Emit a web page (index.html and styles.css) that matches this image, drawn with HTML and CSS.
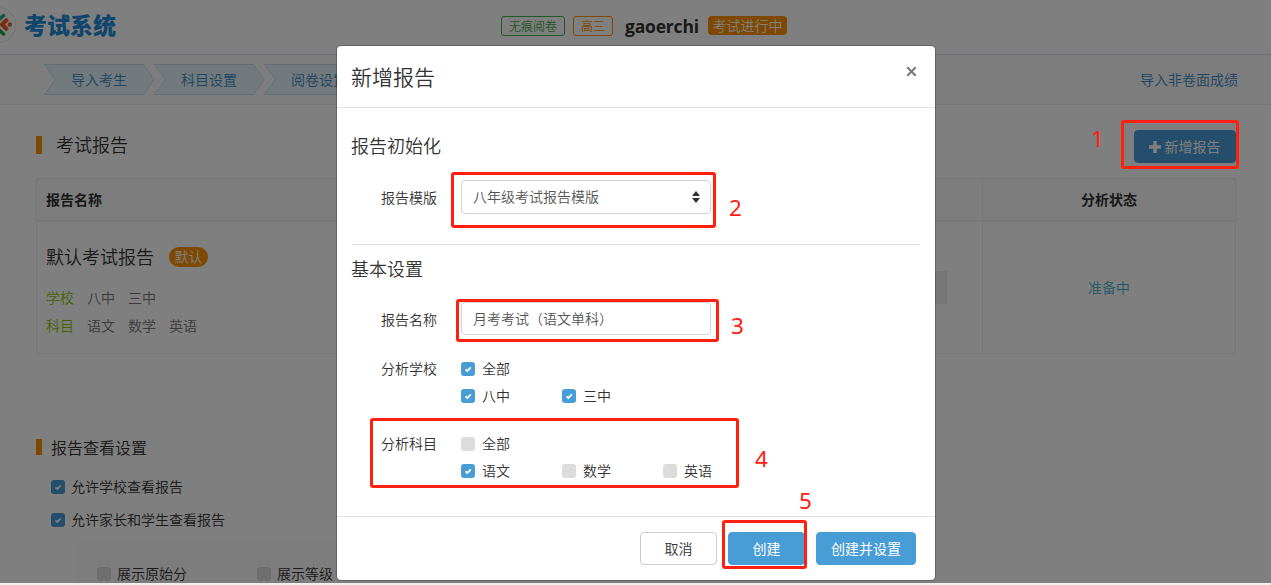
FILE: index.html
```html
<!DOCTYPE html>
<html lang="zh-CN">
<head>
    <meta charset="UTF-8">
    <meta name="viewport" content="width=device-width, initial-scale=1.0">
    <title>考试系统</title>
    <link rel="stylesheet" href="styles.css">
</head>
<body>
    <div class="page">
        <header class="header">
            <div class="logo">
                <svg class="logo-mark" width="16" height="36" viewBox="0 0 16 36">
                    <circle cx="-2" cy="18" r="17.5" fill="#fff" stroke="#e6e6e6"/>
                    <path d="M-1 12.500 L3.500 8.500" stroke="#22a596" stroke-width="3.500" stroke-linecap="round"/>
                    <path d="M-1 23 L3.500 27" stroke="#22a03c" stroke-width="3.500" stroke-linecap="round"/>
                    <path d="M7.500 12 L2 17.500 L7.500 23" fill="none" stroke="#f05a1e" stroke-width="4"/>
                    <circle cx="9.800" cy="17.500" r="2.200" fill="#f05a1e"/>
                </svg>
                <span class="logo-text">考试系统</span>
            </div>
            <div class="exam-info">
                <span class="tag tag-green">无痕阅卷</span>
                <span class="tag tag-orange">高三</span>
                <span class="exam-name">gaoerchi</span>
                <span class="tag-status">考试进行中</span>
            </div>
        </header>

        <nav class="nav">
            <div class="steps">
                <a class="step">
                    <svg width="111" height="31" viewBox="0 0 111 31"><path d="M.5 .5H99.500L110 15.500L99.500 30.500H.5L11.500 15.500Z"/></svg>
                    <span>导入考生</span>
                </a>
                <a class="step">
                    <svg width="111" height="31" viewBox="0 0 111 31"><path d="M.5 .5H99.500L110 15.500L99.500 30.500H.5L11.500 15.500Z"/></svg>
                    <span>科目设置</span>
                </a>
                <a class="step">
                    <svg width="111" height="31" viewBox="0 0 111 31"><path d="M.5 .5H99.500L110 15.500L99.500 30.500H.5L11.500 15.500Z"/></svg>
                    <span>阅卷设置</span>
                </a>
            </div>
            <a class="nav-link">导入非卷面成绩</a>
        </nav>

        <main class="content">
            <div class="title-row">
                <h2 class="title">考试报告</h2>
                <button class="btn btn-primary btn-add">
                    <svg width="12" height="12" viewBox="0 0 12 12"><path d="M4.300 0H7.700V4.300H12V7.700H7.700V12H4.300V7.700H0V4.300H4.300Z" fill="#fff"/></svg>
                    新增报告
                </button>
            </div>

            <div class="table">
                <div class="table-head">
                    <div class="cell">报告名称</div>
                    <div class="cell cell-status">分析状态</div>
                </div>
                <div class="table-body">
                    <div class="cell">
                        <div class="report-info">
                            <div class="report-name">默认考试报告<span class="badge">默认</span></div>
                            <div class="report-line"><b>学校</b><span>八中</span><span>三中</span></div>
                            <div class="report-line"><b>科目</b><span>语文</span><span>数学</span><span>英语</span></div>
                        </div>
                        <div class="report-action"></div>
                    </div>
                    <div class="cell cell-status">准备中</div>
                </div>
            </div>

            <h2 class="title title-view">报告查看设置</h2>
            <div class="view-options">
                <div class="check checked">
                    <svg class="box" viewBox="0 0 14 14"><path d="M4.500 7.300L6.300 9L9.800 5.300"/></svg>
                    <span>允许学校查看报告</span>
                </div>
                <div class="check checked">
                    <svg class="box" viewBox="0 0 14 14"><path d="M4.500 7.300L6.300 9L9.800 5.300"/></svg>
                    <span>允许家长和学生查看报告</span>
                </div>
            </div>
            <div class="sub-options">
                <div class="check"><i class="box"></i><span>展示原始分</span></div>
                <div class="check"><i class="box"></i><span>展示等级</span></div>
            </div>
        </main>
        <div class="backdrop"></div>
    </div>

    <div class="modal">
        <div class="modal-header">
            <h3>新增报告</h3>
            <svg class="close" width="11" height="11" viewBox="0 0 11 11"><path d="M1.300 1.300L9.700 9.700M9.700 1.300L1.300 9.700"/></svg>
        </div>
        <div class="modal-body">
            <section class="section-init">
                <h4>报告初始化</h4>
                <div class="form-row">
                    <label>报告模版</label>
                    <div class="field">
                        八年级考试报告模版
                        <svg width="8" height="12" viewBox="0 0 8 12"><path d="M0 5L4 0L8 5ZM0 7H8L4 12Z" fill="#333"/></svg>
                    </div>
                </div>
            </section>
            <section class="section-basic">
                <h4>基本设置</h4>
                <div class="form-row">
                    <label>报告名称</label>
                    <div class="field field-name">月考考试（语文单科）</div>
                </div>
                <div class="form-row check-row">
                    <label>分析学校</label>
                    <div class="checks">
                        <div class="check check-all checked">
                            <svg class="box" viewBox="0 0 14 14"><path d="M4.500 7.300L6.300 9L9.800 5.300"/></svg>
                            <span>全部</span>
                        </div>
                        <div class="check checked">
                            <svg class="box" viewBox="0 0 14 14"><path d="M4.500 7.300L6.300 9L9.800 5.300"/></svg>
                            <span>八中</span>
                        </div>
                        <div class="check checked">
                            <svg class="box" viewBox="0 0 14 14"><path d="M4.500 7.300L6.300 9L9.800 5.300"/></svg>
                            <span>三中</span>
                        </div>
                    </div>
                </div>
                <div class="form-row check-row">
                    <label>分析科目</label>
                    <div class="checks">
                        <div class="check check-all"><i class="box"></i><span>全部</span></div>
                        <div class="check checked">
                            <svg class="box" viewBox="0 0 14 14"><path d="M4.500 7.300L6.300 9L9.800 5.300"/></svg>
                            <span>语文</span>
                        </div>
                        <div class="check"><i class="box"></i><span>数学</span></div>
                        <div class="check"><i class="box"></i><span>英语</span></div>
                    </div>
                </div>
            </section>
        </div>
        <div class="modal-footer">
            <button class="btn btn-default">取消</button>
            <button class="btn btn-primary">创建</button>
            <button class="btn btn-primary btn-wide">创建并设置</button>
        </div>
    </div>

    <!-- Numbered guide marks -->
    <div class="mark mark-1"><span>1</span></div>
    <div class="mark mark-2"><span>2</span></div>
    <div class="mark mark-3"><span>3</span></div>
    <div class="mark mark-4"><span>4</span></div>
    <div class="mark mark-5"><span>5</span></div>
</body>
</html>
```
FILE: styles.css
```css
* {
    box-sizing: border-box;
}

body {
    margin: 0;
    height: 585px;
    overflow: hidden;
    position: relative;
    background-color: #f0f0f0;
    font-family: "Open Sans", "Noto Sans CJK SC", sans-serif;
    font-size: 14px;
    line-height: 20px;
    font-weight: 350;
    color: #333;
}

h2, h3, h4 {
    margin: 0;
    font-weight: 350;
}

.page {
    position: relative;
    height: 583px;
    overflow: hidden;
    background: #fff;
}

.backdrop {
    position: absolute;
    inset: 0;
    background: rgba(0, 0, 0, 0.5);
}

/* Header */
.header {
    position: relative;
    height: 55px;
    border-bottom: 1px solid #d3deea;
}

.logo {
    display: flex;
    align-items: center;
    padding-top: 7px;
}

.logo-text {
    margin-left: 8px;
    font-size: 23px;
    line-height: 36px;
    font-weight: 900;
    color: #218ad8;
}

.exam-info {
    position: absolute;
    left: 501px;
    top: 16px;
    display: flex;
    align-items: center;
    height: 20px;
}

.tag {
    height: 20px;
    padding: 0 7px;
    margin-right: 8px;
    border: 1px solid;
    border-radius: 3px;
    font-size: 12px;
    line-height: 19px;
}

.tag-green {
    color: #4cae4c;
}

.tag-orange {
    color: #ff9000;
}

.exam-name {
    width: 74px;
    margin: -1px 9px 0 4px;
    font-size: 17.500px;
    font-weight: 700;
    letter-spacing: -0.200px;
}

.tag-status {
    width: 79px;
    height: 19px;
    margin-top: -1px;
    border-radius: 4px;
    background: #ff9000;
    color: #fff;
    line-height: 19px;
    text-align: center;
}

/* Step navigation */
.nav {
    display: flex;
    justify-content: space-between;
    height: 50px;
    padding: 9px 33px 0 44px;
    background: #fbfbfb;
    border-bottom: 1px solid #eee;
    color: #3c8dc5;
}

.steps {
    display: flex;
}

.step {
    position: relative;
    width: 110px;
    height: 31px;
    line-height: 31px;
    text-align: center;
}

.step svg {
    position: absolute;
    left: 0;
    top: 0;
    fill: #e6f4fa;
    stroke: #c5dfee;
}

.step span {
    position: relative;
}

.nav-link {
    line-height: 31px;
}

/* Reports */
.content {
    padding: 25px 35px 0 36px;
}

.title-row {
    display: flex;
    justify-content: space-between;
    height: 48px;
}

.title {
    height: 18px;
    margin-top: 6px;
    padding-left: 14px;
    border-left: 6px solid #ff9000;
    font-size: 18px;
    line-height: 18px;
}

.btn {
    height: 33px;
    padding: 0;
    border: 1px solid #489dd6;
    border-radius: 4px;
    font: inherit;
}

.btn-primary {
    background: #489dd6;
    color: #fff;
    font-weight: 400;
}

.btn-add {
    display: flex;
    align-items: center;
    justify-content: center;
    gap: 4px;
    width: 102px;
    padding-right: 1px;
}

.table {
    border: 1px solid #eee;
}

.table-head,
.table-body {
    display: flex;
}

.table-head {
    height: 43px;
    border-bottom: 2px solid #eee;
    background: #fbfbfb;
    font-weight: 700;
    line-height: 42px;
}

.table-body {
    height: 131px;
}

.cell {
    flex: 1;
    display: flex;
    justify-content: space-between;
    padding: 0 35px 0 9px;
}

.cell-status {
    flex: none;
    width: 253px;
    padding: 0;
    border-left: 1px solid #eee;
    justify-content: center;
}

.table-body .cell-status {
    line-height: 131px;
    color: #45b1d0;
}

.report-name {
    display: flex;
    align-items: center;
    height: 28px;
    margin: 21px 0 13px;
    font-size: 18px;
}

.badge {
    width: 39px;
    height: 20px;
    margin-left: 15px;
    border-radius: 10px;
    background: #ff9000;
    color: #fff;
    font-size: 14px;
    line-height: 20px;
    text-align: center;
}

.report-line {
    display: flex;
    gap: 13px;
    height: 28px;
    line-height: 28px;
    color: #777;
}

.report-line b {
    font-weight: inherit;
    color: #8fc400;
}

.report-action {
    width: 60px;
    height: 33px;
    margin-top: 49px;
    background: #eee;
}

/* View settings */
.title-view {
    height: 16px;
    margin-top: 85px;
    padding-left: 9px;
    font-size: 16px;
    line-height: 18px;
}

.view-options {
    padding: 22px 0 0 15px;
}

.view-options .check {
    height: 20px;
    margin-bottom: 13px;
}

.sub-options {
    display: flex;
    width: 800px;
    height: 60px;
    margin: -1px 0 0 40px;
    padding: 22px 21px;
    background: #fbfbfb;
}

.sub-options .check {
    width: 160px;
    height: 20px;
}

.check {
    display: flex;
    align-items: center;
}

.box {
    width: 14px;
    height: 14px;
    margin-right: 7px;
    border-radius: 3px;
    background: #dcdcdc;
}

.page .box {
    margin-right: 6px;
}

.box path {
    fill: none;
    stroke: #fff;
    stroke-width: 1.8;
}

.checked .box {
    background: #489dd6;
}

/* Modal */
.modal {
    position: absolute;
    left: 336px;
    top: 45px;
    width: 600px;
    height: 536px;
    border: 1px solid rgba(0, 0, 0, 0.2);
    border-radius: 5px;
    background: #fff;
    background-clip: padding-box;
}

.modal-header {
    display: flex;
    justify-content: space-between;
    height: 62px;
    padding: 0 18px 0 14px;
    border-bottom: 1px solid #e5e5e5;
}

.modal-header h3 {
    font-size: 21px;
    line-height: 62px;
}

.close {
    margin-top: 20px;
    stroke: #777;
    stroke-width: 2;
}

.modal-body {
    height: 408px;
    padding: 0 15px;
}

.modal-body h4 {
    margin-left: -1px;
    font-size: 18px;
    line-height: 26px;
}

.section-init {
    height: 137px;
    padding-top: 25px;
    border-bottom: 1px solid #e5e5e5;
}

.section-basic {
    padding-top: 11px;
}

.form-row {
    display: flex;
    height: 34px;
    margin-top: 20px;
    padding-left: 29px;
}

.section-init .form-row {
    margin-top: 21px;
}

.form-row label {
    width: 80px;
    line-height: 36px;
}

.field {
    display: flex;
    align-items: center;
    justify-content: space-between;
    width: 250px;
    height: 34px;
    padding: 0 10px 0 11px;
    border: 1px solid #d4d4d4;
    border-radius: 4px;
    color: #555;
}

.field-name {
    height: 33px;
}

.form-row.check-row {
    height: 54px;
    margin-top: 19px;
}

.check-row + .form-row.check-row {
    margin-top: 21px;
}

.form-row.check-row label {
    line-height: 27px;
}

.checks {
    display: flex;
    flex-wrap: wrap;
    width: 310px;
}

.checks .check {
    width: 101px;
    height: 27px;
}

.checks .check-all {
    width: 100%;
}

.modal-footer {
    display: flex;
    justify-content: flex-end;
    height: 64px;
    padding: 15px 19px 0 0;
    border-top: 1px solid #e5e5e5;
}

.modal-footer .btn {
    width: 77px;
    margin-left: 11px;
}

.modal-footer .btn-wide {
    width: 100px;
}

.btn-default {
    border-color: #ccc;
    background: #fff;
    color: #333;
}

/* Guide marks */
.mark {
    position: absolute;
    border: 3px solid #ff2010;
    border-radius: 3px;
}

.mark span {
    position: absolute;
    font-family: "Noto Sans", sans-serif;
    font-size: 22.500px;
    font-weight: 400;
    line-height: 24px;
    color: #ff2010;
}

.mark-1 {
    left: 1121px;
    top: 120px;
    width: 118px;
    height: 49px;
}

.mark-1 span {
    left: -33px;
    top: 4px;
}

.mark-2 {
    left: 451px;
    top: 172px;
    width: 265px;
    height: 56px;
}

.mark-2 span {
    left: 275px;
    top: 21px;
}

.mark-3 {
    left: 456px;
    top: 299px;
    width: 263px;
    height: 43px;
}

.mark-3 span {
    left: 272px;
    top: 12px;
}

.mark-4 {
    left: 370px;
    top: 418px;
    width: 369px;
    height: 70px;
}

.mark-4 span {
    left: 382px;
    top: 26px;
}

.mark-5 {
    left: 722px;
    top: 520px;
    width: 85px;
    height: 49px;
}

.mark-5 span {
    left: 74px;
    top: -34px;
}
```
